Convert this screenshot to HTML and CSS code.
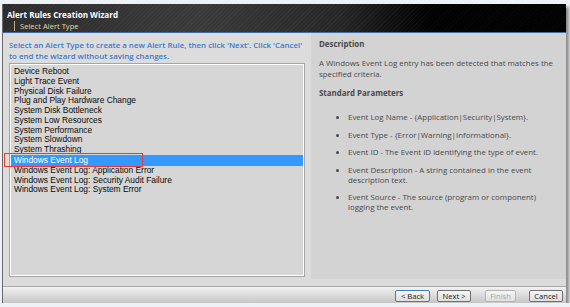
FILE: index.html
```html
<!DOCTYPE html>
<html>
	<head>
		<meta charset="utf-8">
		<title>Alert Rules Creation Wizard</title>
		<link rel="stylesheet" href="styles.css">
	</head>
	<body>
		<div class="wizard">
			<div class="header">
				<div class="title">Alert Rules Creation Wizard</div>
				<div class="subtitle">Select Alert Type</div>
			</div>
			<div class="main">
				<div class="leftcol">
					<p class="hint">Select an Alert Type to create a new Alert Rule, then click 'Next'. Click 'Cancel' to end the wizard without saving changes.</p>
					<div class="listbox">
						<div class="item">Device Reboot</div>
						<div class="item">Light Trace Event</div>
						<div class="item">Physical Disk Failure</div>
						<div class="item">Plug and Play Hardware Change</div>
						<div class="item">System Disk Bottleneck</div>
						<div class="item">System Low Resources</div>
						<div class="item">System Performance</div>
						<div class="item">System Slowdown</div>
						<div class="item">System Thrashing</div>
						<div class="item selected">Windows Event Log<span class="mark"></span></div>
						<div class="item">Windows Event Log: Application Error</div>
						<div class="item">Windows Event Log: Security Audit Failure</div>
						<div class="item">Windows Event Log: System Error</div>
					</div>
				</div>
				<div class="details">
					<h4>Description</h4>
					<p>A Windows Event Log entry has been detected that matches the specified criteria.</p>
					<h4>Standard Parameters</h4>
					<ul>
						<li>Event Log Name - {Application|Security|System}.</li>
						<li>Event Type - {Error|Warning|Informational}.</li>
						<li>Event ID - The Event ID identifying the type of event.</li>
						<li>Event Description - A string contained in the event description text.</li>
						<li>Event Source - The source (program or component) logging the event.</li>
					</ul>
				</div>
			</div>
			<div class="buttons">
				<button class="btn default">&lt; Back</button>
				<button class="btn">Next &gt;</button>
				<button class="btn disabled">Finish</button>
				<button class="btn">Cancel</button>
			</div>
		</div>
	</body>
</html>
```

FILE: styles.css
```css
body {
	margin: 0;
	background: #eef1f6;
	font-family: "Open Sans", "Liberation Sans", sans-serif;
	font-size: 7.9px;
}

.wizard {
	margin: 4px 0 0 2px;
	width: 563px;
	height: 299px;
	display: flex;
	flex-direction: column;
	background: #dcdcdc;
	border-left: 1px solid #6a6a6a;
	box-shadow: 3px 3px 3px #8a8a8a;
}

.header {
	height: 29px;
	border-bottom: 1px solid #3e6ea8;
	background:
		repeating-linear-gradient(135deg, rgba(255,255,255,0.03) 0 1px, rgba(0,0,0,0) 1px 3px),
		linear-gradient(to right, #2c2c2c 0%, #3a3a3a 35%, #262626 60%, #000 76%, #000 100%);
	padding: 5px 0 0 4px;
	box-sizing: border-box;
}

.title {
	color: #fff;
	font-weight: bold;
	font-size: 8.1px;
	line-height: 11px;
}

.subtitle {
	color: #eadca0;
	font-size: 7.6px;
	line-height: 10px;
	margin: 1px 0 0 7px;
	padding-left: 5px;
	border-left: 1px solid #b8ad84;
}

.main {
	flex: 1;
	display: flex;
}

.leftcol {
	width: 296px;
	padding: 7px 6px 9px 6px;
	display: flex;
	flex-direction: column;
}

.hint {
	margin: 0 0 1px 0;
	color: #3b7ad0;
	font-weight: 600;
	line-height: 11px;
}

.listbox {
	flex: 1;
	background: #d6d6d6;
	border: 1px solid #a4a4a4;
	box-shadow: inset 0 0 0 1px #fff;
	padding: 3px 1px 2px 1px;
	color: #0a0a0a;
	font-family: "Liberation Sans", Arial, sans-serif;
	font-size: 8.4px;
}

.item {
	line-height: 9.75px;
	padding-left: 3px;
}

.item.selected {
	position: relative;
	background: #3399ff;
	color: #fff;
	height: 11px;
	line-height: 11px;
}

.mark {
	position: absolute;
	left: -7px;
	top: -2px;
	width: 137px;
	height: 12px;
	border: 1px solid #e63a3a;
}

.details {
	flex: 1;
	background: #d3d3d3;
	padding: 6px 4px 0 8px;
	margin-bottom: 7px;
	color: #4a4a4a;
}

.details h4 {
	margin: 0;
	font-size: 7.9px;
	line-height: 11px;
	font-weight: bold;
}

.details p {
	margin: 8px 0 9px 0;
	line-height: 10.5px;
}

.details ul {
	margin: 13px 0 0 0;
	padding-left: 29px;
}

.details li {
	line-height: 10px;
	margin-bottom: 7.5px;
}

.buttons {
	height: 17px;
	border-top: 1px solid #a8a8a8;
	background: linear-gradient(#f2f2f2, #c6c6c6);
	display: flex;
	justify-content: flex-end;
	align-items: flex-end;
	padding: 0 3px 1px 0;
	box-sizing: border-box;
}

.btn {
	height: 12px;
	width: 34px;
	margin-left: 7px;
	padding: 0;
	font-family: "Open Sans", "Liberation Sans", sans-serif;
	font-size: 7.6px;
	color: #222;
	border: 1px solid #707070;
	border-radius: 2px;
	background: linear-gradient(#f6f6f6, #dedede);
}

.btn.default {
	width: 35px;
	border-color: #3c7fb1;
}

.btn.disabled {
	width: 31px;
	margin-left: 14px;
	color: #a8a8a8;
	border-color: #b4b4b4;
}

.btn.disabled + .btn {
	margin-left: 13px;
}
```
